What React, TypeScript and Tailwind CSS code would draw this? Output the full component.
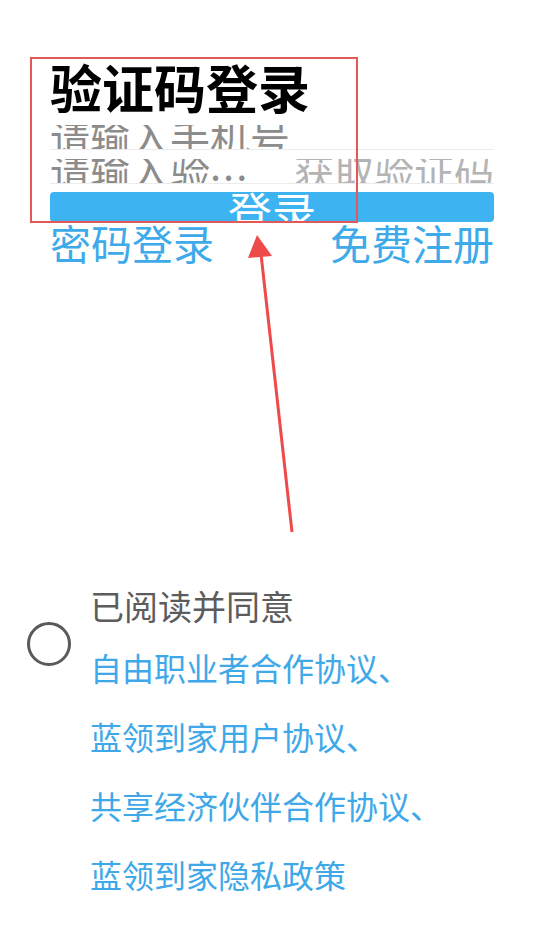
import React from 'react'

const FONT = { fontFamily: '"Noto Sans CJK SC", "Noto Sans", sans-serif' }

const AGREEMENTS = [
  '自由职业者合作协议、',
  '蓝领到家用户协议、',
  '共享经济伙伴合作协议、',
  '蓝领到家隐私政策',
]

function InputRow({ children, h }: { children: React.ReactNode; h: string }) {
  return (
    <div className={`flex items-end border-b border-[#ececec] ${h}`}>
      <div className="flex h-[24px] w-full items-center justify-between overflow-hidden text-[40px] leading-none">
        {children}
      </div>
    </div>
  )
}

export default function App() {
  return (
    <div className="relative h-[948px] w-[542px] overflow-hidden bg-white" style={FONT}>
      <div className="pl-[50px] pr-[48px] pt-[60px]">
        <h1 className="h-[54px] whitespace-nowrap pt-[1px] text-[52px] font-bold leading-none text-black">验证码登录</h1>

        <div className="mt-[3px]">
          <InputRow h="h-[33px]">
            <span className="whitespace-nowrap text-[#8c8c8c]">请输入手机号</span>
          </InputRow>
          <InputRow h="h-[34px]">
            <span className="whitespace-nowrap text-[#8c8c8c]">
              请输入验<span className="relative -top-[8px] tracking-[2px]">...</span>
            </span>
            <span className="whitespace-nowrap text-[#b4b4b4]">获取验证码</span>
          </InputRow>
        </div>

        <button className="mt-[8px] flex h-[30px] w-full items-start justify-center overflow-hidden rounded-[4px] bg-[#3db4f1]">
          <span className="-mt-[3px] whitespace-nowrap text-[44px] leading-none text-white">登录</span>
        </button>

        <div className="flex justify-between text-[41px] leading-none text-[#3eaaea]">
          <span>密码登录</span>
          <span>免费注册</span>
        </div>
      </div>

      {/* agreement */}
      <div className="mt-[326px] flex items-start pl-[27px]">
        <div className="mt-[33px] h-[44px] w-[44px] shrink-0 rounded-full border-[3.5px] border-[#5a5a5a]" />
        <div className="ml-[19px]">
          <p className="h-[34px] whitespace-nowrap text-[34px] leading-[34px] text-[#5c5c5c]">已阅读并同意</p>
          <div className="mt-[10px] text-[32px] leading-[69px] text-[#3ea8e8]">
            {AGREEMENTS.map(a => (
              <p key={a} className="whitespace-nowrap">{a}</p>
            ))}
          </div>
        </div>
      </div>

      {/* annotation */}
      <div className="pointer-events-none absolute left-[30px] top-[57px] h-[166px] w-[328px] border-2 border-[#e35858]" />
      <svg className="pointer-events-none absolute left-0 top-0" width="542" height="948">
        <line x1="292" y1="532" x2="261" y2="254" stroke="#ef4a4a" strokeWidth="3" />
        <polygon points="257,235 248,258 272,256" fill="#ef4a4a" />
      </svg>
    </div>
  )
}
